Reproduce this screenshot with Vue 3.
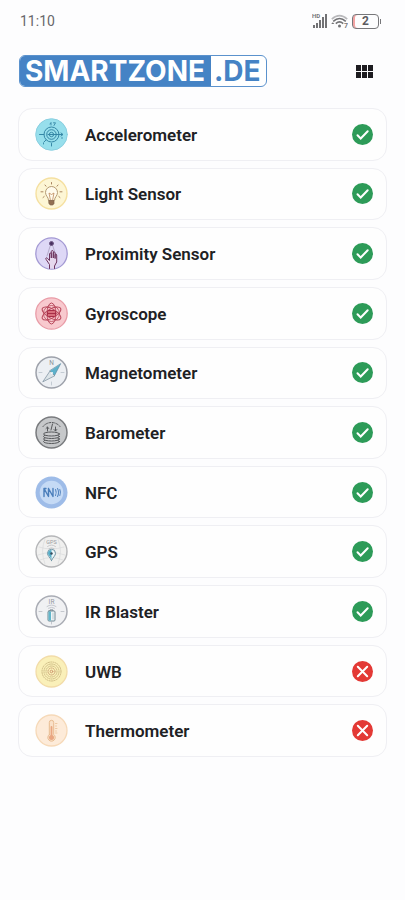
<script setup>
const sensors = [
  { id: 'accelerometer', name: 'Accelerometer', ok: true },
  { id: 'light', name: 'Light Sensor', ok: true },
  { id: 'proximity', name: 'Proximity Sensor', ok: true },
  { id: 'gyroscope', name: 'Gyroscope', ok: true },
  { id: 'magnetometer', name: 'Magnetometer', ok: true },
  { id: 'barometer', name: 'Barometer', ok: true },
  { id: 'nfc', name: 'NFC', ok: true },
  { id: 'gps', name: 'GPS', ok: true },
  { id: 'ir', name: 'IR Blaster', ok: true },
  { id: 'uwb', name: 'UWB', ok: false },
  { id: 'thermometer', name: 'Thermometer', ok: false },
]
</script>

<template>
  <div class="page">
    <div class="status">
      <span class="clock">11:10</span>
      <div class="indicators">
        <svg viewBox="0 0 15 16" width="15" height="16">
          <text x="0" y="5" font-size="6" font-weight="700" fill="#77777a">HD</text>
          <g fill="#727275">
            <rect x="1" y="12" width="2" height="3" />
            <rect x="4" y="10" width="2" height="5" />
            <rect x="7" y="7" width="2" height="8" />
            <rect x="10" y="4" width="2" height="11" />
            <rect x="13" y="1" width="2" height="14" />
          </g>
        </svg>
        <svg viewBox="0 0 17 16" width="17" height="16">
          <g fill="none" stroke-width="1.6">
            <path d="M.8 6.2Q8.5-.8 16.2 6.2" stroke="#b9b9bc" />
            <path d="M2.2 8.4Q8.5 2.6 14.8 8.4" stroke="#727275" />
            <path d="M4.8 10.600Q8.5 7.200 12.2 10.600" stroke="#727275" />
          </g>
          <circle cx="8.5" cy="13" r="1.500" fill="#727275" />
          <path d="M1.800 9.200 3.400 11H.2Z" fill="#727275" />
          <text x="13" y="15" font-size="7" font-weight="700" fill="#77777a">7</text>
        </svg>
        <div class="battery"><span>2</span></div>
      </div>
    </div>

    <header class="header">
      <h1 class="logo"><span class="logo-main">SMARTZONE</span><span class="logo-tld">.DE</span></h1>
      <button class="menu" type="button" aria-label="Menu">
        <svg viewBox="0 0 17 13" width="17" height="13" fill="#1d1c20">
          <rect width="5" height="6" /><rect x="6" width="5" height="6" /><rect x="12" width="5" height="6" />
          <rect y="7" width="5" height="6" /><rect x="6" y="7" width="5" height="6" /><rect x="12" y="7" width="5" height="6" />
        </svg>
      </button>
    </header>

    <ul class="list">
      <li v-for="s in sensors" :key="s.id" class="card">
        <svg class="icon" viewBox="0 0 33 33" width="33" height="33" fill="none" stroke-linecap="round" stroke-linejoin="round" aria-hidden="true">
          <g v-if="s.id === 'accelerometer'" stroke="#3587a6">
            <circle cx="16.5" cy="16.5" r="15.8" fill="#97dfec" stroke="#8bcfe0" />
            <circle cx="16.5" cy="16.5" r="7.5" />
            <circle cx="16.5" cy="16.5" r="4.8" />
            <circle cx="16.5" cy="16.5" r="2.2" />
            <path d="M4.5 16.5H9M13 16.5H27.5M26 15l2 1.500-2 1.500M16.500 25.500v2.500M11 22l-2 2" />
            <path d="M16 7V4.500L15 6M18.500 4.800h2L19 7.500M27 19.500v1M8.500 25v1" stroke-width=".9" />
          </g>
          <g v-else-if="s.id === 'light'">
            <circle cx="16.5" cy="16.5" r="15.5" fill="#fdf6d5" stroke="#f5e0a0" stroke-width="1.4" />
            <path d="M13.500 23c0-3-3-4-3-7.500a6 6 0 0 1 12 0c0 3.500-3 4.500-3 7.500Z" fill="#fffbec" stroke="#b49a72" />
            <path d="M15.300 22.500 14 16l2.500 1.500L19 16l-1.300 6.500" stroke="#bd895c" stroke-width=".8" />
            <path d="M14 23.500h5v3l-1.200 1.500h-2.600L14 26.500Z" fill="#927052" stroke="#80634a" stroke-width=".7" />
            <path d="M16.500 5.500V7M10 8l1 1.200M23 8l-1 1.200M6 14.800h2M25 14.800h2M8 20.500l1.200-1M25 20.500l-1.200-1" stroke="#aa8560" />
          </g>
          <g v-else-if="s.id === 'proximity'">
            <circle cx="16.5" cy="16.5" r="15.7" fill="#ded8f6" stroke="#a49ad4" stroke-width="1.3" />
            <path d="M15.500 8 12 19M17.500 8 21 19" stroke="#aaa0bf" stroke-width=".8" />
            <circle cx="16.5" cy="6.500" r="2" fill="#493162" stroke="#6f5885" />
            <path d="M14.500 31.500v-4L11 22.300c-.8-1.300.5-2 1.500-1l2 2.200V17c0-1.300 1.800-1.300 1.800 0v4-6.500c0-1.300 2-1.300 2 0V21v-5c0-1.300 1.800-1.300 1.800 0v5.500-3.500c0-1.200 1.600-1.200 1.600 0v7l-2.200 4v2.500" fill="#e6d8ee" stroke="#6c345e" />
          </g>
          <g v-else-if="s.id === 'gyroscope'" stroke="#b8475b">
            <circle cx="16.5" cy="16.5" r="15.7" fill="#f8c9ce" stroke="#e99ca7" stroke-width="1.3" />
            <ellipse cx="16.5" cy="16.5" rx="4.5" ry="10.5" />
            <ellipse cx="16.5" cy="16.5" rx="4.5" ry="10.5" transform="rotate(60 16.5 16.5)" />
            <ellipse cx="16.5" cy="16.5" rx="4.5" ry="10.5" transform="rotate(120 16.5 16.5)" />
            <circle cx="16.5" cy="16.5" r="8" stroke-width=".8" />
            <rect x="12.5" y="13.5" width="8" height="6" rx="1" fill="#d86f7c" stroke="#a92f48" />
            <path d="M12.500 16.500h8" stroke="#a92f48" />
          </g>
          <g v-else-if="s.id === 'magnetometer'">
            <circle cx="16.5" cy="16.5" r="15.5" fill="#eceff3" stroke="#9da1aa" stroke-width="1.5" />
            <path d="M4 16.500h3M26 16.500h3M16.500 26v3" stroke="#c3cbd3" />
            <text x="16.5" y="9" text-anchor="middle" font-size="6.500" fill="#8d9299">N</text>
            <path d="m25.500 8-6 11.500-4.500-4.500Z" fill="#5db1cb" stroke="#5c8ba3" stroke-width=".7" />
            <path d="M8 25.500 15 15l4.500 4.500Z" fill="#dce4e8" stroke="#758a99" stroke-width=".7" />
            <circle cx="17" cy="17" r="1" fill="#fff" />
          </g>
          <g v-else-if="s.id === 'barometer'" stroke="#57595c">
            <circle cx="16.5" cy="16.5" r="15.5" fill="#c6c8ca" stroke="#787a7d" stroke-width="1.5" />
            <path d="M8 10.500a11 11 0 0 1 17 0" stroke-dasharray="2 1.5" />
            <path d="M12.500 15v-4l-1.500 1.500M12.500 11l1.200 1.500M16 14l1.500-6M20.500 11v4l1.300-1.500M20.500 15l-1.500-1.500" />
            <g fill="#c9cacc">
              <ellipse cx="16.5" cy="25.5" rx="8" ry="2" />
              <ellipse cx="16.5" cy="23" rx="8" ry="2" />
              <ellipse cx="16.5" cy="20.5" rx="8" ry="2" />
              <ellipse cx="16.5" cy="18" rx="8" ry="2" />
            </g>
          </g>
          <g v-else-if="s.id === 'nfc'">
            <circle cx="16.5" cy="16.5" r="16" fill="#9ebce8" />
            <circle cx="16.5" cy="16.5" r="11.8" fill="#c5daf5" />
            <path d="M9 20.500v-8l4.500 8v-8M13.500 12.500l4.500 8v-8M9 12.500h2" stroke="#4a7ebb" stroke-width="1.400" />
            <path d="M20.500 13.500q1.500 3 0 6M22.500 12.500q2.200 4 0 8M24.800 13.500q1.500 3 0 6" stroke="#5787c1" stroke-width="1.1" />
          </g>
          <g v-else-if="s.id === 'gps'">
            <circle cx="16.5" cy="16.5" r="15.5" fill="#f0f0ef" stroke="#b5b6b8" stroke-width="1.4" />
            <path d="M4 12q12 4 25 0M3 20q13-5 27 0M10 4q-5 12 0 25M23 4q5 12 0 25M5 25q11-5 23 0" stroke="#d9dadb" stroke-width=".7" />
            <text x="16.5" y="8.5" text-anchor="middle" font-size="5.500" fill="#999b9e">GPS</text>
            <path d="M12.500 11.500q4-3 8 0M14 13.500q2.500-1.500 5 0" stroke="#bebfc1" stroke-width=".8" />
            <path d="M16.500 25.500c-1.500-3.500-4-4.500-4-7.200a4 4 0 0 1 8 0c0 2.700-2.500 3.700-4 7.200Z" fill="#eef6f8" stroke="#6c93a4" />
            <path d="M16.500 24.500c-1.200-3-3.500-4-3.500-6.200A3.500 3.500 0 0 1 16.500 15Z" fill="#56aec8" />
            <circle cx="16.5" cy="18.5" r="1.2" fill="#354a5c" />
          </g>
          <g v-else-if="s.id === 'ir'">
            <circle cx="16.5" cy="16.5" r="15.5" fill="#f0f1f3" stroke="#a9acb4" stroke-width="1.5" />
            <path d="M4 16.500h3M26 16.500h3M16.500 27v2M12 11.500q4.500-3 9 0M13.500 13.200q3-1.800 6 0" stroke="#c3c7cd" />
            <text x="16.5" y="8.5" text-anchor="middle" font-size="6.500" fill="#95989f">IR</text>
            <path d="M15 15.500V15h3v.5" stroke="#687984" />
            <rect x="13" y="16" width="7" height="10" rx="1" fill="#eef4f6" stroke="#718893" />
            <rect x="13.5" y="16.5" width="2.500" height="9" fill="#62b6ca" />
            <path d="M18 18v6" stroke="#a3b8bf" stroke-width=".7" />
          </g>
          <g v-else-if="s.id === 'uwb'" stroke="#cdba83">
            <circle cx="16.5" cy="16.5" r="15.5" fill="#faf0b9" stroke="#f2dca8" stroke-width="1.3" />
            <circle cx="16.5" cy="16.5" r="9.5" stroke-dasharray="1 1.300" />
            <circle cx="16.5" cy="16.5" r="7.5" stroke-dasharray="1 1.200" />
            <circle cx="16.5" cy="16.5" r="5.5" stroke-dasharray="1 1.200" />
            <circle cx="16.5" cy="16.5" r="3.5" stroke-dasharray="1 1.200" stroke="#c9a173" />
            <circle cx="16.5" cy="16.5" r="1.3" stroke="#d09b71" />
          </g>
          <g v-else>
            <circle cx="16.5" cy="16.5" r="15.5" fill="#fdebd9" stroke="#f6d9b8" stroke-width="1.3" />
            <path d="M14.300 20.500V8.500a2.200 2.200 0 0 1 4.400 0v12a3.700 3.700 0 1 1-4.400 0Z" fill="#fae1c9" stroke="#e8bc91" />
            <path d="M16.500 13v10" stroke="#e9a681" stroke-width="1.8" />
            <circle cx="16.5" cy="23.5" r="2.5" fill="#e9a681" />
            <path d="M20.500 9.500h1.500M20.500 12h1M20.500 14.500h1.500M20.500 17h1M20.500 19h1.500" stroke="#eec8a3" />
          </g>
        </svg>
        <span class="name">{{ s.name }}</span>
        <svg class="state" viewBox="0 0 21 21" width="21" height="21" role="img" :aria-label="s.ok ? 'Available' : 'Not available'" fill="none" stroke="#fff" stroke-width="2" stroke-linecap="round">
          <circle cx="10.5" cy="10.5" r="10.5" :fill="s.ok ? '#2d9b58' : '#e33935'" stroke="none" />
          <path v-if="s.ok" d="m5.500 11.300 3.200 3.200 7-7.300" />
          <path v-else d="m5.800 5.800 9.400 9.400M15.200 5.800l-9.400 9.400" />
        </svg>
      </li>
    </ul>
  </div>
</template>

<style>
body {
  background: #fdfdfe;
}
</style>

<style scoped>
.page {
  box-sizing: border-box;
  min-height: 100vh;
  padding: 12px 18px 24px;
  background: #fdfdfe;
  color: #202124;
  font-family: Roboto, "Liberation Sans", sans-serif;
}
.status {
  display: flex;
  align-items: center;
  justify-content: space-between;
  height: 18px;
  padding: 0 8px 0 2px;
}
.clock {
  color: #68686b;
  font-size: 14px;
  line-height: 18px;
}
.indicators {
  display: flex;
  align-items: center;
  gap: 4px;
}
.battery {
  position: relative;
  box-sizing: border-box;
  width: 27px;
  height: 15px;
  border: 1px solid #77777a;
  border-radius: 4px;
  box-shadow: inset 2px 0 #f4a3a3;
  color: #5c5c60;
  font-size: 12px;
  font-weight: 700;
  line-height: 13px;
  text-align: center;
}
.battery::after {
  content: "";
  position: absolute;
  top: 4px;
  right: -3px;
  width: 1px;
  height: 5px;
  background: #77777a;
}
.header {
  display: flex;
  align-items: center;
  justify-content: space-between;
  margin-top: 25px;
  padding: 0 9px 0 1px;
}
.logo {
  display: flex;
  overflow: hidden;
  margin: 0;
  border: 1px solid #5b92cd;
  border-radius: 6px;
  background: #fff;
  font-family: Inter, sans-serif;
  font-size: 28px;
  font-weight: 700;
  line-height: 30px;
}
.logo-main {
  padding: 0 6px 0 5px;
  background: #4583c5;
  color: #fff;
}
.logo-tld {
  padding: 0 5px 0 3px;
  color: #4583c5;
}
.menu {
  display: grid;
  place-items: center;
  padding: 4px 5px;
  border: 0;
  background: none;
}
.list {
  display: grid;
  gap: 7px;
  min-height: 649px;
  margin: 21px 0 0;
  padding: 0;
  list-style: none;
}
.card {
  display: flex;
  align-items: center;
  gap: 17px;
  padding: 8px 13px 8px 16px;
  border: 1px solid #efeff3;
  border-radius: 14px;
  background: #fefefe;
}
.icon,
.state {
  flex: none;
}
.name {
  flex: 1;
  padding-top: 1px;
  font-size: 17px;
  font-weight: 600;
  line-height: 22px;
}
</style>
